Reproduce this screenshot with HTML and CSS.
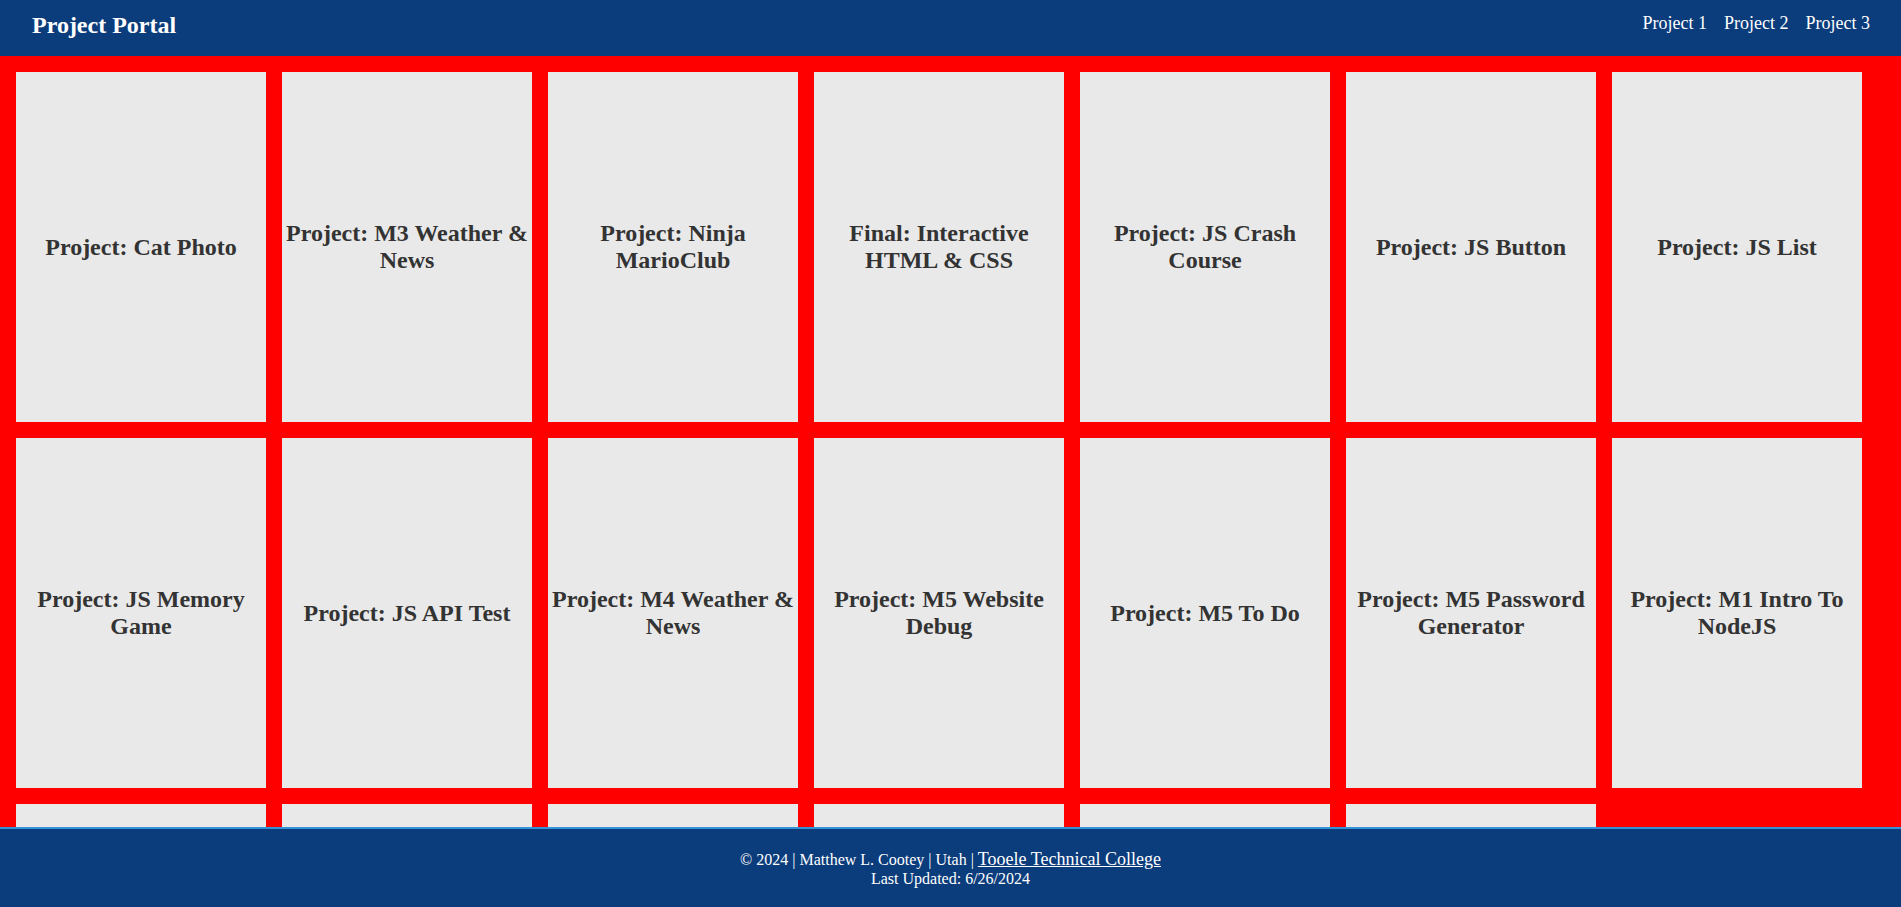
FILE: index.html
```html
<!DOCTYPE html>
<html lang="en">
<head>
<meta charset="utf-8">
<title>Project Portal</title>
<link rel="stylesheet" href="styles.css">
</head>
<body>
<header class="site-header">
  <h1 class="site-title">Project Portal</h1>
  <nav class="site-nav">
    <a class="nav-link" href="#">Project 1</a>
    <a class="nav-link" href="#">Project 2</a>
    <a class="nav-link" href="#">Project 3</a>
  </nav>
</header>
<main class="projects">
  <a class="card" href="#"><h2 class="card-title">Project: Cat Photo</h2></a>
  <a class="card" href="#"><h2 class="card-title">Project: M3 Weather &amp; News</h2></a>
  <a class="card" href="#"><h2 class="card-title">Project: Ninja MarioClub</h2></a>
  <a class="card" href="#"><h2 class="card-title">Final: Interactive HTML &amp; CSS</h2></a>
  <a class="card" href="#"><h2 class="card-title">Project: JS Crash Course</h2></a>
  <a class="card" href="#"><h2 class="card-title">Project: JS Button</h2></a>
  <a class="card" href="#"><h2 class="card-title">Project: JS List</h2></a>
  <a class="card" href="#"><h2 class="card-title">Project: JS Memory Game</h2></a>
  <a class="card" href="#"><h2 class="card-title">Project: JS API Test</h2></a>
  <a class="card" href="#"><h2 class="card-title">Project: M4 Weather &amp; News</h2></a>
  <a class="card" href="#"><h2 class="card-title">Project: M5 Website Debug</h2></a>
  <a class="card" href="#"><h2 class="card-title">Project: M5 To Do</h2></a>
  <a class="card" href="#"><h2 class="card-title">Project: M5 Password Generator</h2></a>
  <a class="card" href="#"><h2 class="card-title">Project: M1 Intro To NodeJS</h2></a>
  <a class="card" href="#"><h2 class="card-title">Project: M1 Node Server</h2></a>
  <a class="card" href="#"><h2 class="card-title">Project: M2 Express</h2></a>
  <a class="card" href="#"><h2 class="card-title">Project: M2 REST API</h2></a>
  <a class="card" href="#"><h2 class="card-title">Project: M3 MongoDB</h2></a>
  <a class="card" href="#"><h2 class="card-title">Project: M4 React</h2></a>
  <a class="card" href="#"><h2 class="card-title">Final: Full Stack App</h2></a>
</main>
<footer class="site-footer">
  <div class="footer-line">&copy; 2024 | Matthew L. Cootey | Utah | <a class="footer-link" href="#">Tooele Technical College</a></div>
  <div class="footer-line">Last Updated: 6/26/2024</div>
</footer>
</body>
</html>
```

FILE: styles.css
```css
html, body {
  margin: 0;
  padding: 0;
}

body {
  font-family: "Liberation Serif", "Times New Roman", serif;
  background: #ff0000;
}

.site-header {
  height: 56px;
  box-sizing: border-box;
  background: #0b3c7b;
  display: flex;
  justify-content: space-between;
  align-items: flex-start;
  padding: 11px 31px 0 32px;
}

.site-title {
  margin: 0;
  font-size: 24px;
  line-height: 28px;
  font-weight: bold;
  color: #ffffff;
}

.site-nav {
  display: flex;
  gap: 17px;
  margin-top: 2px;
}

.nav-link {
  color: #ffffff;
  text-decoration: none;
  font-size: 18px;
}

.projects {
  display: grid;
  grid-template-columns: repeat(auto-fill, 250px);
  grid-auto-rows: 350px;
  gap: 16px;
  padding: 16px 16px 120px 16px;
  background: #ff0000;
}

.card {
  background: #e9e9e9;
  display: flex;
  align-items: center;
  justify-content: center;
  text-align: center;
  text-decoration: none;
}

.card-title {
  margin: 0;
  font-size: 24px;
  font-weight: bold;
  color: #333333;
}

.site-footer {
  position: fixed;
  left: 0;
  right: 0;
  bottom: 0;
  height: 80px;
  box-sizing: border-box;
  background: #0b3c7b;
  border-top: 2px solid #3592d6;
  padding-top: 2px;
  color: #ffffff;
  display: flex;
  flex-direction: column;
  align-items: center;
  justify-content: center;
  font-size: 16px;
}

.footer-line {
  line-height: 19px;
}

.footer-link {
  color: #ffffff;
  font-size: 18px;
  text-decoration: underline;
}
```
